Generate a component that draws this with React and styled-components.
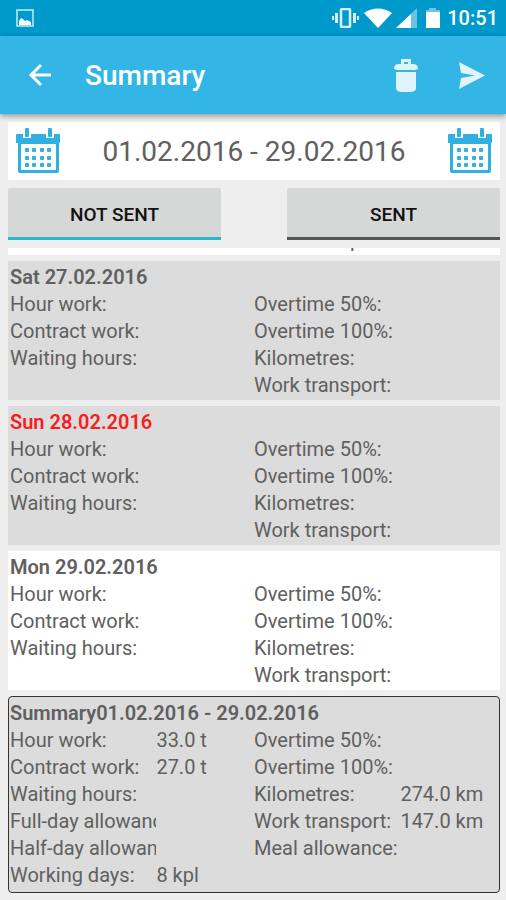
import styled, { createGlobalStyle } from 'styled-components';

const GlobalStyle = createGlobalStyle`
  :root {
    --status: #0099cc;
    --blue: #33b5e5;
    --page: #eeeeee;
    --grey: #dcdcdc;
    --text: #606060;
    --red: #f71d20;
  }

  * {
    box-sizing: border-box;
  }

  body {
    margin: 0;
    background: var(--page);
    color: var(--text);
    font-family: Roboto, 'Liberation Sans', sans-serif;
    font-size: 20px;
    line-height: 27px;
  }

  button {
    padding: 0;
    border: 0;
    background: none;
    color: inherit;
    font: inherit;
    cursor: pointer;
  }

  svg {
    display: block;
  }
`;

const Screen = styled.div`
  display: flex;
  flex-direction: column;
  height: 100vh;
`;

const StatusBar = styled.div`
  display: flex;
  align-items: center;
  flex: none;
  height: 36px;
  padding: 0 8px 0 16px;
  background: var(--status);
  color: #fff;
`;

const StatusIcons = styled.div`
  display: flex;
  align-items: center;
  gap: 4px;
  margin-left: auto;
`;

const Clock = styled.span`
  font-weight: 500;
`;

const Toolbar = styled.header`
  display: flex;
  align-items: center;
  flex: none;
  height: 78px;
  padding: 0 16px 0 22px;
  background: var(--blue);
  color: #fff;
  box-shadow: 0 2px 6px rgba(0, 0, 0, 0.4);
  z-index: 1;
`;

const Title = styled.h1`
  flex: 1;
  margin: 0 0 0 27px;
  font-size: 28px;
  font-weight: 500;
`;

const IconButton = styled.button`
  display: flex;
  align-items: center;
  justify-content: center;
  width: 36px;
  height: 48px;
`;

const Actions = styled.div`
  display: flex;
  gap: 30px;
  opacity: 0.85;
`;

const Content = styled.main`
  display: flex;
  flex-direction: column;
  flex: 1;
  gap: 8px;
  min-height: 0;
  padding: 8px 6px 7px 8px;
`;

const Period = styled.section`
  display: flex;
  align-items: center;
  justify-content: space-between;
  flex: none;
  height: 58px;
  padding: 0 7px;
  background: #fff;
  font-size: 28px;
`;

const CalendarButton = styled.button`
  width: 46px;
  height: 46px;
`;

const Filters = styled.div`
  display: flex;
  justify-content: space-between;
  flex: none;
  gap: 66px;
`;

const FilterButton = styled.button`
  flex: 1;
  height: 52px;
  border-radius: 2px 2px 0 0;
  box-shadow: inset 0 -3px ${({ $active }) => ($active ? '#2db5cb' : '#555')};
  background: #d6d7d7;
  color: #111;
  font-size: 19px;
  font-weight: 500;
`;

// column-reverse keeps the list scrolled to the summary at the bottom
const ListScroller = styled.div`
  display: flex;
  flex-direction: column-reverse;
  flex: 1;
  min-height: 0;
  overflow-y: auto;
  scrollbar-width: none;
`;

const List = styled.div`
  display: flex;
  flex-direction: column;
  flex: none;
  gap: 6px;
  margin-bottom: auto;
`;

const Card = styled.article`
  padding: 3px 2px 1px;
  background: ${({ $grey }) => ($grey ? 'var(--grey)' : '#fff')};
`;

const SummaryCard = styled(Card)`
  padding: 3px 1px;
  border: 1px solid #333;
  border-radius: 4px;
`;

const CardTitle = styled.h2`
  margin: 0;
  color: ${({ $red }) => ($red ? 'var(--red)' : 'inherit')};
  font-size: 20px;
  font-weight: 600;
`;

const Fields = styled.dl`
  display: grid;
  grid-template-columns: 3fr 2fr 3fr 2fr;
  grid-auto-rows: 27px;
  margin: 0;
`;

const Label = styled.dt`
  overflow: hidden;
  white-space: nowrap;
`;

const Value = styled.dd`
  margin: 0;
  white-space: nowrap;
`;

const dayFields = [
  ['Hour work:', ''],
  ['Overtime 50%:', ''],
  ['Contract work:', ''],
  ['Overtime 100%:', ''],
  ['Waiting hours:', ''],
  ['Kilometres:', ''],
  ['', ''],
  ['Work transport:', ''],
];

const summaryFields = [
  ['Hour work:', '33.0 t'],
  ['Overtime 50%:', ''],
  ['Contract work:', '27.0 t'],
  ['Overtime 100%:', ''],
  ['Waiting hours:', ''],
  ['Kilometres:', '274.0 km'],
  ['Full-day allowance:', ''],
  ['Work transport:', '147.0 km'],
  ['Half-day allowance:', ''],
  ['Meal allowance:', ''],
  ['Working days:', '8 kpl'],
];

const days = [
  { title: 'Sat 27.02.2016', grey: true },
  { title: 'Sun 28.02.2016', grey: true, red: true },
  { title: 'Mon 29.02.2016' },
];

function FieldList({ fields }) {
  return (
    <Fields>
      {fields.map(([label, value], i) => [
        <Label key={`label-${i}`}>{label}</Label>,
        <Value key={`value-${i}`}>{value}</Value>,
      ])}
    </Fields>
  );
}

function CalendarIcon() {
  const dots = [];
  [20, 28, 35].forEach((y) => {
    [10, 17, 25, 32].forEach((x) => {
      dots.push(<rect key={`${x}-${y}`} x={x} y={y} width="4" height="4" rx="1" />);
    });
  });
  return (
    <svg width="46" height="46" viewBox="0 0 46 46" fill="#2fb0e0">
      <path d="M2 6h42q1 0 1 1v8h-1v28q0 2-2 2H5q-2 0-2-2V15H1V7q0-1 1-1z" />
      <path d="M6 16h35v26H6z" fill="#fff" />
      <path d="M8 5h8v5H8zM31 5h8v5h-8z" fill="#fff" />
      <rect x="10" y="0" width="4" height="9" rx="1" />
      <rect x="33" y="0" width="4" height="9" rx="1" />
      {dots}
    </svg>
  );
}

function PictureIcon() {
  return (
    <svg width="18" height="18" viewBox="0 0 18 18">
      <rect x="1" y="1" width="16" height="16" fill="none" stroke="#c9ebf7" strokeWidth="1.5" />
      <path d="M3 16v-4l2-3 2 1 2 2 2-1 2 1 2 1v3z" fill="#fff" />
    </svg>
  );
}

function VibrateIcon() {
  return (
    <svg width="28" height="20" viewBox="0 0 28 20" fill="#d9f1fa">
      <rect x="9" y="1" width="9" height="18" rx="1" fill="none" stroke="#d9f1fa" strokeWidth="2.5" />
      <path d="M3 5h3v10H3zM0 8h2v4H0zM21 5h3v10h-3zM25 8h2v4h-2z" />
    </svg>
  );
}

function WifiIcon() {
  return (
    <svg width="28" height="20" viewBox="0 0 28 20" fill="#fff">
      <path d="M0 5C8-1 20-1 28 5L14 20z" />
    </svg>
  );
}

function SignalIcon() {
  return (
    <svg width="21" height="20" viewBox="0 0 21 20">
      <path d="M0 20L21 0v20z" fill="#6cc4e2" />
      <path d="M0 20L15 6v14z" fill="#fff" />
    </svg>
  );
}

function BatteryIcon() {
  return (
    <svg width="22" height="20" viewBox="0 0 22 20">
      <path d="M8 0h7v2h4v3H5V2h3z" fill="#6cc4e2" />
      <path d="M5 4h14v16H5z" fill="#fff" />
    </svg>
  );
}

function BackIcon() {
  return (
    <svg width="24" height="24" viewBox="0 0 24 24" fill="none" stroke="#fff" strokeWidth="3">
      <path d="M23 12H3M13 2L3 12l10 10" />
    </svg>
  );
}

function TrashIcon() {
  return (
    <svg width="24" height="34" viewBox="0 0 24 34" fill="#fff">
      <path d="M7 7V2q0-1 1-1h8q1 0 1 1v5h-3V4h-4v3z" />
      <path d="M0 11q0-5 5-5h14q5 0 5 5l-3 1H3z" />
      <path d="M2 14h20v16q0 4-6 4H8q-6 0-6-4z" />
    </svg>
  );
}

function SendIcon() {
  return (
    <svg width="27" height="27" viewBox="0 0 27 27" fill="#fff">
      <path d="M0 0l26 13.500L0 27l2-11 14-2.500L2 11z" />
    </svg>
  );
}

export default function App() {
  return (
    <Screen>
      <GlobalStyle />
      <StatusBar>
        <PictureIcon />
        <StatusIcons>
          <VibrateIcon />
          <WifiIcon />
          <SignalIcon />
          <BatteryIcon />
          <Clock>10:51</Clock>
        </StatusIcons>
      </StatusBar>
      <Toolbar>
        <IconButton aria-label="Back">
          <BackIcon />
        </IconButton>
        <Title>Summary</Title>
        <Actions>
          <IconButton aria-label="Delete">
            <TrashIcon />
          </IconButton>
          <IconButton aria-label="Send">
            <SendIcon />
          </IconButton>
        </Actions>
      </Toolbar>
      <Content>
        <Period>
          <CalendarButton aria-label="Start date">
            <CalendarIcon />
          </CalendarButton>
          <span>01.02.2016 - 29.02.2016</span>
          <CalendarButton aria-label="End date">
            <CalendarIcon />
          </CalendarButton>
        </Period>
        <Filters>
          <FilterButton $active aria-pressed="true">
            NOT SENT
          </FilterButton>
          <FilterButton aria-pressed="false">SENT</FilterButton>
        </Filters>
        <ListScroller>
          <List>
            <Card>
              <FieldList fields={dayFields.slice(-2)} />
            </Card>
            {days.map(({ title, grey, red }) => (
              <Card key={title} $grey={grey}>
                <CardTitle $red={red}>{title}</CardTitle>
                <FieldList fields={dayFields} />
              </Card>
            ))}
            <SummaryCard $grey>
              <CardTitle>Summary01.02.2016 - 29.02.2016</CardTitle>
              <FieldList fields={summaryFields} />
            </SummaryCard>
          </List>
        </ListScroller>
      </Content>
    </Screen>
  );
}
